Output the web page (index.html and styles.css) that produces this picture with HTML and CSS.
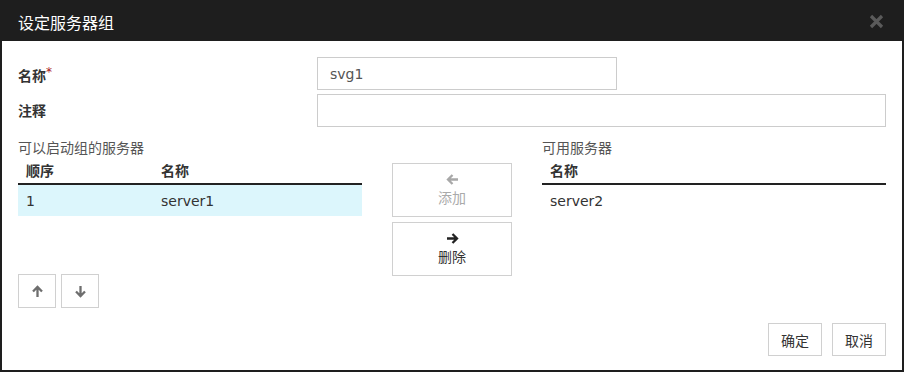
FILE: index.html
```html
<!DOCTYPE html>
<html lang="zh">
<head>
    <meta charset="UTF-8">
    <title>设定服务器组</title>
    <link rel="stylesheet" href="styles.css">
</head>
<body>
<div class="dialog">
    <div class="dialog-header">
        <span class="dialog-title">设定服务器组</span>
        <svg class="close" width="15" height="15" viewBox="0 0 15 15">
            <path d="M2 2 L13 13 M13 2 L2 13" stroke="#5a5a5a" stroke-width="3.2" fill="none"/>
        </svg>
    </div>

    <div class="dialog-body">
        <div class="form-row">
            <label class="form-label">名称<span class="req">*</span></label>
            <input type="text" class="input input-short" value="svg1">
        </div>
        <div class="form-row">
            <label class="form-label">注释</label>
            <input type="text" class="input input-long" value="">
        </div>

        <div class="lists">
            <div class="list-col">
                <div class="list-title">可以启动组的服务器</div>
                <table class="list-table">
                    <tr><th class="col-order">顺序</th><th>名称</th></tr>
                    <tr class="selected"><td class="col-order">1</td><td>server1</td></tr>
                </table>
                <div class="move-btns">
                    <button class="btn btn-icon">
                        <svg width="13" height="13" viewBox="0 0 13 13">
                            <path d="M6.5 12 V2 M2 6.5 L6.5 2 L11 6.5" stroke="#6e6e6e" stroke-width="2.3" fill="none"/>
                        </svg>
                    </button>
                    <button class="btn btn-icon">
                        <svg width="13" height="13" viewBox="0 0 13 13">
                            <path d="M6.5 1 V11 M2 6.5 L6.5 11 L11 6.5" stroke="#6e6e6e" stroke-width="2.3" fill="none"/>
                        </svg>
                    </button>
                </div>
            </div>

            <div class="mid-col">
                <button class="btn btn-move disabled">
                    <svg width="13" height="13" viewBox="0 0 13 13">
                        <path d="M12 6.5 H2 M6.5 2 L2 6.5 L6.5 11" stroke="#a8a8a8" stroke-width="2.3" fill="none"/>
                    </svg>
                    <span>添加</span>
                </button>
                <button class="btn btn-move">
                    <svg width="13" height="13" viewBox="0 0 13 13">
                        <path d="M1 6.5 H11 M6.5 2 L11 6.5 L6.5 11" stroke="#222" stroke-width="2.3" fill="none"/>
                    </svg>
                    <span>删除</span>
                </button>
            </div>

            <div class="list-col">
                <div class="list-title">可用服务器</div>
                <table class="list-table">
                    <tr><th>名称</th></tr>
                    <tr><td>server2</td></tr>
                </table>
            </div>
        </div>

        <div class="dialog-footer">
            <button class="btn btn-footer">确定</button>
            <button class="btn btn-footer">取消</button>
        </div>
    </div>
</div>
</body>
</html>
```

FILE: styles.css
```css
html, body {
    margin: 0;
    height: 100%;
}

body {
    font-family: "DejaVu Sans", "Noto Sans CJK SC", sans-serif;
    font-size: 14px;
    color: #333;
    background: #fff;
}

.dialog {
    width: 904px;
    height: 372px;
    box-sizing: border-box;
    border: 2px solid #1e1e1e;
    display: flex;
    flex-direction: column;
}

.dialog-header {
    background: #1e1e1e;
    height: 39px;
    padding: 0 18px 0 16px;
    display: flex;
    align-items: center;
    justify-content: space-between;
}

.dialog-title {
    color: #fff;
    font-size: 16px;
    font-family: "Noto Sans CJK SC", sans-serif;
}

.dialog-body {
    padding: 16px 16px 0 16px;
    flex: 1;
    display: flex;
    flex-direction: column;
}

.form-row {
    display: flex;
    align-items: center;
    margin-bottom: 4px;
}

.form-label {
    width: 299px;
    font-weight: bold;
    line-height: 18px;
}

.req {
    color: #a8201a;
    font-weight: normal;
    font-size: 12px;
    vertical-align: 5px;
}

.input {
    height: 33px;
    box-sizing: border-box;
    border: 1px solid #ccc;
    padding: 0 12px;
    font-family: "DejaVu Sans", "Noto Sans CJK SC", sans-serif;
    font-size: 14px;
    color: #555;
    outline: none;
}

.input-short {
    width: 300px;
}

.input-long {
    width: 569px;
}

.lists {
    display: grid;
    grid-template-columns: 344px 1fr 344px;
    margin-top: 8px;
}

.list-title {
    color: #555;
    height: 18px;
    line-height: 18px;
}

.list-table {
    width: 100%;
    border-collapse: collapse;
}

.list-table th {
    text-align: left;
    font-weight: bold;
    height: 27px;
    padding: 0 8px;
    border-bottom: 2px solid #222;
    box-sizing: border-box;
}

.list-table td {
    height: 32px;
    padding: 0 8px;
    box-sizing: border-box;
}

.col-order {
    width: 135px;
}

.selected td {
    background: #dcf6fc;
}

.move-btns {
    display: flex;
    gap: 5px;
    margin-top: 58px;
}

.btn {
    background: #fff;
    border: 1px solid #d0d0d0;
    box-sizing: border-box;
    font-family: "Noto Sans CJK SC", sans-serif;
    font-size: 14px;
    color: #333;
    cursor: pointer;
    padding: 0;
}

.btn-icon {
    width: 38px;
    height: 34px;
    display: flex;
    align-items: center;
    justify-content: center;
}

.mid-col {
    display: flex;
    flex-direction: column;
    align-items: center;
    gap: 5px;
    padding-top: 24px;
}

.btn-move {
    width: 120px;
    height: 54px;
    display: flex;
    flex-direction: column;
    align-items: center;
    padding-top: 9px;
    gap: 2px;
}

.btn-move span {
    line-height: 18px;
}

.btn-move.disabled {
    color: #aaa;
}

.dialog-footer {
    display: flex;
    justify-content: flex-end;
    gap: 10px;
    margin-top: 15px;
}

.btn-footer {
    width: 54px;
    height: 33px;
}
```
